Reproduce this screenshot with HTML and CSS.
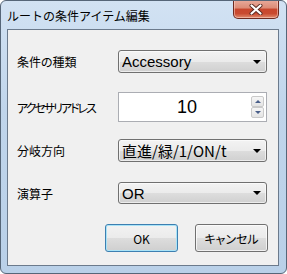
FILE: index.html
```html
<!DOCTYPE html>
<html lang="ja">
<head>
<meta charset="utf-8">
<title>ルートの条件アイテム編集</title>
<link rel="stylesheet" href="styles.css">
</head>
<body>
<div class="window">
  <div class="titlebar">
    <span class="title">ルートの条件アイテム編集</span>
    <div class="close">
      <svg width="14" height="11" viewBox="0 0 14 11">
        <path d="M2.5 1.5 L11.5 9.5 M11.5 1.5 L2.5 9.5" stroke="#5a2a22" stroke-width="4" stroke-linecap="round"/>
        <path d="M2.5 1.5 L11.5 9.5 M11.5 1.5 L2.5 9.5" stroke="#ffffff" stroke-width="2.2" stroke-linecap="round"/>
      </svg>
    </div>
  </div>
  <div class="client">
    <div class="row row-1">
      <span class="label">条件の種類</span>
      <div class="combo"><span class="combo-text">Accessory</span><span class="arrow"></span></div>
    </div>
    <div class="row row-2">
      <span class="label label-narrow">アクセサリアドレス</span>
      <div class="spin">
        <span class="spin-value">10</span>
        <div class="spin-btns">
          <div class="spin-btn"><span class="tri up"></span></div>
          <div class="spin-btn"><span class="tri down"></span></div>
        </div>
      </div>
    </div>
    <div class="row row-3">
      <span class="label">分岐方向</span>
      <div class="combo"><span class="combo-text cjk">直進/緑/1/ON/t</span><span class="arrow"></span></div>
    </div>
    <div class="row row-4">
      <span class="label">演算子</span>
      <div class="combo"><span class="combo-text">OR</span><span class="arrow"></span></div>
    </div>
    <div class="buttons">
      <button class="btn btn-default">OK</button>
      <button class="btn">キャンセル</button>
    </div>
  </div>
</div>
</body>
</html>
```
FILE: styles.css
```css
html, body {
  margin: 0;
  padding: 0;
  background: #ffffff;
}

.window {
  width: 287px;
  height: 274px;
  box-sizing: border-box;
  border: 1px solid #566678;
  border-radius: 6px;
  background: linear-gradient(to bottom, #d2e2f3 0%, #c0d5eb 40%, #b9d0e8 100%);
  display: flex;
  flex-direction: column;
  overflow: hidden;
}

.titlebar {
  height: 28px;
  display: flex;
  justify-content: space-between;
  align-items: flex-start;
  padding: 0 7px 0 6px;
}

.title {
  font: 12px "Noto Sans CJK JP", sans-serif;
  color: #000;
  margin-top: 6px;
  line-height: 17px;
}

.close {
  width: 46px;
  height: 19px;
  margin-top: -1px;
  box-sizing: border-box;
  border: 1px solid #6e2a20;
  border-top: none;
  border-radius: 0 0 5px 5px;
  background: linear-gradient(to bottom, #e9ab9c 0%, #dc8b76 45%, #c8462d 50%, #c94a30 75%, #e08b6e 100%);
  box-shadow: inset 0 0 0 1px rgba(255, 220, 210, 0.5);
  display: flex;
  align-items: center;
  justify-content: center;
}

.client {
  flex: 1;
  margin: 0 7px 7px 6px;
  border: 1px solid #6b7a8c;
  background: #f0f0f0;
  padding: 20px 10px 0 9px;
  display: flex;
  flex-direction: column;
}

.row {
  display: flex;
  align-items: center;
}

.row-2 { margin-top: 19px; }
.row-3 { margin-top: 17px; }
.row-4 { margin-top: 20px; }

.label {
  width: 101px;
  flex: none;
  font: 12px "Noto Sans CJK JP", sans-serif;
  font-feature-settings: "palt";
  color: #000;
  white-space: nowrap;
}

.label-narrow {
  letter-spacing: -2px;
}

.combo {
  width: 149px;
  height: 23px;
  box-sizing: border-box;
  border: 1px solid #707070;
  border-radius: 3px;
  background: linear-gradient(to bottom, #f3f3f3 0%, #ebebeb 50%, #dddddd 51%, #d0d0d0 100%);
  box-shadow: inset 0 0 0 1px rgba(255, 255, 255, 0.6);
  display: flex;
  align-items: center;
  padding: 0 5px 0 3px;
}

.row-4 .combo { height: 22px; }

.combo-text {
  flex: 1;
  font: 15px "Liberation Sans", sans-serif;
  color: #000;
  white-space: nowrap;
  overflow: hidden;
}

.combo-text.cjk {
  font: 15px "Noto Sans CJK JP", sans-serif;
  line-height: 20px;
}

.arrow {
  width: 0;
  height: 0;
  border-left: 4px solid transparent;
  border-right: 4px solid transparent;
  border-top: 4px solid #000;
  margin-left: 4px;
}

.spin {
  width: 149px;
  height: 30px;
  box-sizing: border-box;
  border: 1px solid #abadb3;
  background: #fff;
  display: flex;
  align-items: center;
  padding-right: 2px;
}

.spin-value {
  flex: 1;
  text-align: center;
  font: 18px "Liberation Sans", sans-serif;
  color: #000;
  padding-left: 4px;
}

.spin-btns {
  width: 13px;
  display: flex;
  flex-direction: column;
}

.spin-btn {
  height: 11px;
  box-sizing: border-box;
  border: 1px solid #c9c9c9;
  border-radius: 2px;
  background: linear-gradient(to bottom, #f6f6f6, #e4e4e4);
  display: flex;
  align-items: center;
  justify-content: center;
}

.tri {
  width: 0;
  height: 0;
  border-left: 3px solid transparent;
  border-right: 3px solid transparent;
}

.tri.up { border-bottom: 3px solid #4a5f8a; }
.tri.down { border-top: 3px solid #4a5f8a; }

.buttons {
  display: flex;
  justify-content: flex-end;
  gap: 17px;
  margin-top: 20px;
}

.btn {
  width: 73px;
  height: 28px;
  box-sizing: border-box;
  border: 1px solid #707070;
  border-radius: 3px;
  background: linear-gradient(to bottom, #f2f2f2 0%, #ebebeb 50%, #dddddd 51%, #cfcfcf 100%);
  box-shadow: inset 0 0 0 1px rgba(255, 255, 255, 0.7);
  font: 12px "Noto Sans CJK JP", sans-serif;
  font-feature-settings: "palt";
  color: #000;
  padding: 0;
  margin: 0;
}

.btn-default {
  border-color: #3c7fb1;
  box-shadow: inset 0 0 0 1px #a9e3f7;
}
```
